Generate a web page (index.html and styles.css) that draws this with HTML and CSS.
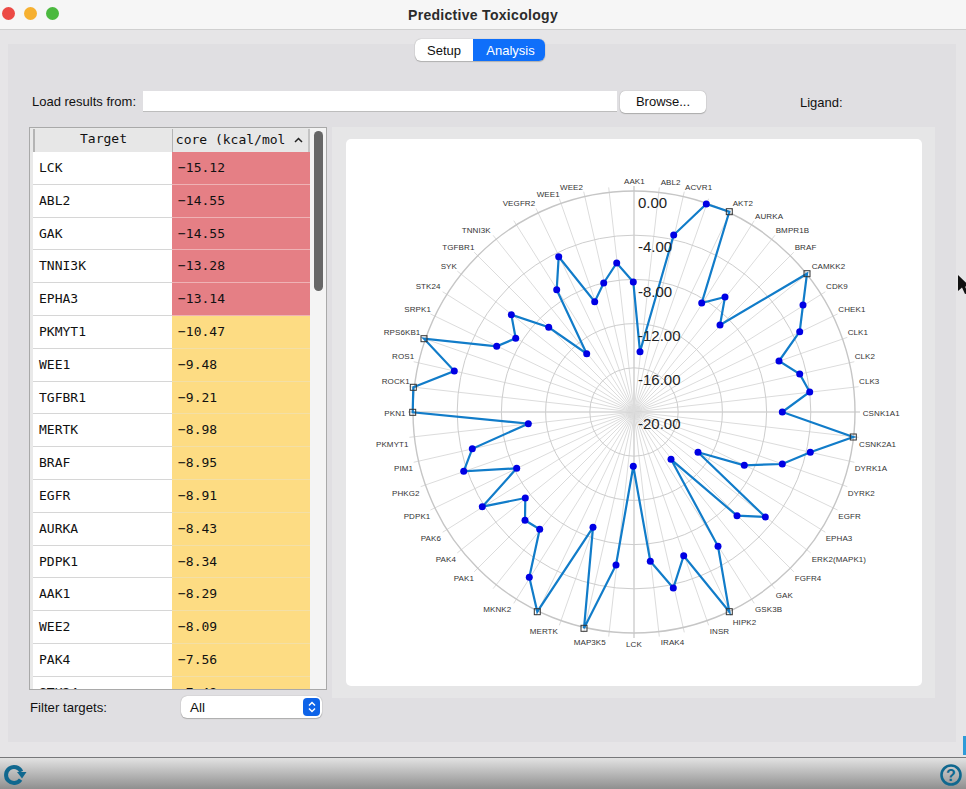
FILE: index.html
```html
<!DOCTYPE html>
<html lang="en">

<head>
  <meta charset="UTF-8">
  <title>Predictive Toxicology</title>
  <link rel="stylesheet" href="styles.css">
</head>

<body>

  <div class="titlebar">
    <div class="lights">
      <span class="light red"></span>
      <span class="light amber"></span>
      <span class="light green"></span>
    </div>
    <div class="title">Predictive Toxicology</div>
  </div>

  <div class="main">
    <div class="pane">

      <div class="tabs">
        <span class="tab">Setup</span>
        <span class="tab active">Analysis</span>
      </div>

      <div class="load">
        <span class="load-label">Load results from:</span>
        <div class="path"></div>
        <div class="browse">Browse...</div>
        <span class="ligand">Ligand:</span>
      </div>

      <div class="content">
        <div class="left">
          <div class="table">
            <div class="rows">
              <div class="head">
                <div class="head-target">Target</div>
                <div class="head-score">
                  <span class="score-text"><span>Score (kcal/mol)</span></span>
                  <svg class="sort" width="9" height="6" viewBox="0 0 9 6"><path d="M1 5 L4.5 1.5 L8 5" fill="none" stroke="#222" stroke-width="1.5"/></svg>
                </div>
              </div>
              <div class="row"><div class="name">LCK</div><div class="score strong">−15.12</div></div>
              <div class="row"><div class="name">ABL2</div><div class="score strong">−14.55</div></div>
              <div class="row"><div class="name">GAK</div><div class="score strong">−14.55</div></div>
              <div class="row"><div class="name">TNNI3K</div><div class="score strong">−13.28</div></div>
              <div class="row"><div class="name">EPHA3</div><div class="score strong">−13.14</div></div>
              <div class="row"><div class="name">PKMYT1</div><div class="score">−10.47</div></div>
              <div class="row"><div class="name">WEE1</div><div class="score">−9.48</div></div>
              <div class="row"><div class="name">TGFBR1</div><div class="score">−9.21</div></div>
              <div class="row"><div class="name">MERTK</div><div class="score">−8.98</div></div>
              <div class="row"><div class="name">BRAF</div><div class="score">−8.95</div></div>
              <div class="row"><div class="name">EGFR</div><div class="score">−8.91</div></div>
              <div class="row"><div class="name">AURKA</div><div class="score">−8.43</div></div>
              <div class="row"><div class="name">PDPK1</div><div class="score">−8.34</div></div>
              <div class="row"><div class="name">AAK1</div><div class="score">−8.29</div></div>
              <div class="row"><div class="name">WEE2</div><div class="score">−8.09</div></div>
              <div class="row"><div class="name">PAK4</div><div class="score">−7.56</div></div>
              <div class="row"><div class="name">STK24</div><div class="score">−7.48</div></div>
            </div>
            <div class="scrollbar"><div class="thumb"></div></div>
          </div>
          <div class="filter">
            <span class="filter-label">Filter targets:</span>
            <div class="select">
              <span>All</span>
              <span class="stepper">
                <svg width="10" height="14" viewBox="0 0 10 14"><path d="M2 5.5 L5 2.5 L8 5.5 M2 8.5 L5 11.5 L8 8.5" fill="none" stroke="#fff" stroke-width="1.5"/></svg>
              </span>
            </div>
          </div>
        </div>

        <div class="plot">
          <div class="plot-card">
            <!-- viewBox is in window coordinates, centre of the radar is 634,413 -->
            <svg class="radar" viewBox="346 140 576 547">
              <g id="spokes"></g>
              <g class="rings">
                <circle cx="634" cy="413" r="221"/>
                <circle cx="634" cy="413" r="176.8"/>
                <circle cx="634" cy="413" r="132.6"/>
                <circle cx="634" cy="413" r="88.4"/>
                <circle cx="634" cy="413" r="44.2"/>
              </g>
              <g id="series"></g>
              <g class="values">
                <text x="638" y="209">0.00</text>
                <text x="638" y="253">-4.00</text>
                <text x="638" y="298">-8.00</text>
                <text x="638" y="342">-12.00</text>
                <text x="638" y="386">-16.00</text>
                <text x="638" y="430">-20.00</text>
              </g>
              <g class="labels">
                <text x="624" y="185">AAK1</text>
                <text x="660.7" y="186">ABL2</text>
                <text x="685" y="191">ACVR1</text>
                <text x="732.7" y="207">AKT2</text>
                <text x="755" y="220">AURKA</text>
                <text x="775.7" y="234">BMPR1B</text>
                <text x="794.7" y="251">BRAF</text>
                <text x="811.7" y="270">CAMKK2</text>
                <text x="826" y="290">CDK9</text>
                <text x="838.3" y="313">CHEK1</text>
                <text x="847.7" y="336">CLK1</text>
                <text x="854.7" y="360">CLK2</text>
                <text x="859" y="385">CLK3</text>
                <text x="862.7" y="416.7">CSNK1A1</text>
                <text x="859" y="448">CSNK2A1</text>
                <text x="854.7" y="472">DYRK1A</text>
                <text x="847.7" y="497">DYRK2</text>
                <text x="838.3" y="520">EGFR</text>
                <text x="825.7" y="542">EPHA3</text>
                <text x="811.7" y="563">ERK2(MAPK1)</text>
                <text x="794.7" y="582">FGFR4</text>
                <text x="775.7" y="599">GAK</text>
                <text x="755" y="613">GSK3B</text>
                <text x="732.7" y="625.7">HIPK2</text>
                <text x="709.7" y="635">INSR</text>
                <text x="660.7" y="646">IRAK4</text>
                <text x="626" y="647.7">LCK</text>
                <text x="573.7" y="646">MAP3K5</text>
                <text x="529.7" y="635">MERTK</text>
                <text x="483.3" y="613">MKNK2</text>
                <text x="453.7" y="582">PAK1</text>
                <text x="435.7" y="563">PAK4</text>
                <text x="420.7" y="542">PAK6</text>
                <text x="403.7" y="520">PDPK1</text>
                <text x="392" y="497">PHKG2</text>
                <text x="394" y="472">PIM1</text>
                <text x="376" y="448">PKMYT1</text>
                <text x="384.3" y="416.7">PKN1</text>
                <text x="381.7" y="385">ROCK1</text>
                <text x="392" y="360">ROS1</text>
                <text x="383.7" y="336">RPS6KB1</text>
                <text x="404.3" y="313">SRPK1</text>
                <text x="415.7" y="290">STK24</text>
                <text x="440.7" y="270">SYK</text>
                <text x="442.3" y="251">TGFBR1</text>
                <text x="461.7" y="234">TNNI3K</text>
                <text x="502.7" y="207">VEGFR2</text>
                <text x="536.7" y="198">WEE1</text>
                <text x="560" y="191">WEE2</text>
              </g>
            </svg>
          </div>
        </div>
      </div>

    </div>
  </div>

  <div class="bottom">
    <svg width="26" height="24" viewBox="0 0 26 24">
      <path d="M18.6 16.6 A8 8 0 1 1 19.3 8.6" fill="none" stroke="#10688f" stroke-width="4"/>
      <path d="M15 9 L24.5 9 L20 15.5 Z" fill="#10688f"/>
    </svg>
    <svg width="24" height="24" viewBox="0 0 24 24">
      <circle cx="12" cy="12" r="9.5" fill="none" stroke="#10688f" stroke-width="2.6"/>
      <text class="help-mark" x="12" y="17.5">?</text>
    </svg>
  </div>

  <div class="edge-mark"></div>
  <svg class="cursor" width="14" height="22" viewBox="0 0 14 22">
    <path d="M1 1 L1 17 L5 13.5 L8 20 L11 19 L8 12.5 L13 12.5 Z" fill="#111"/>
  </svg>

  <script src="chart.js"></script>

</body>

</html>
```

FILE: styles.css
```css
* {
  box-sizing: border-box;
}

html, body {
  margin: 0;
  height: 100%;
}

body {
  position: relative;
  width: 966px;
  height: 789px;
  overflow: hidden;
  display: flex;
  flex-direction: column;
  background: #e6e5e7;
  font-family: "Liberation Sans", Arial, sans-serif;
  font-size: 13px;
  color: #111;
}

/* title bar */
.titlebar {
  position: relative;
  height: 30px;
  flex: none;
  display: flex;
  align-items: center;
  justify-content: center;
  background: #f6f6f6;
  border-bottom: 1px solid #d0d0d0;
}

.lights {
  position: absolute;
  left: 2px;
  top: 7px;
  display: flex;
  gap: 9px;
}

.light {
  width: 13px;
  height: 13px;
  border-radius: 50%;
}

.red { background: #ec4a45; }
.amber { background: #f6b030; }
.green { background: #4bb93f; }

.title {
  font-size: 14px;
  font-weight: bold;
  color: #2b2b2b;
  letter-spacing: .3px;
}

/* tab pane */
.main {
  flex: 1;
  min-height: 0;
  padding: 14px 10px 15px 8px;
}

.pane {
  height: 100%;
  display: flex;
  flex-direction: column;
  background: #e0dfe2;
}

.tabs {
  align-self: center;
  display: flex;
  height: 22px;
  margin: -5px 4px 0 0;
  border-radius: 6px;
  overflow: hidden;
  background: #fff;
  box-shadow: 0 0 1px #8a8a8a, 0 1px 1px #b5b5b5;
}

.tab {
  display: flex;
  align-items: center;
  justify-content: center;
  width: 58px;
  font-size: 13px;
}

.tab.active {
  width: 72px;
  padding-left: 3px;
  background: #0f6ffa;
  color: #fff;
}

.load {
  display: flex;
  align-items: center;
  height: 23px;
  margin-top: 29px;
  padding-left: 24px;
}

.load-label {
  width: 111px;
  font-size: 13px;
  white-space: nowrap;
}

.path {
  width: 474px;
  height: 21px;
  background: #fff;
  border-bottom: 1px solid #bdbdbd;
}

.browse {
  width: 86px;
  height: 22px;
  margin-left: 3px;
  display: flex;
  align-items: center;
  justify-content: center;
  background: #fff;
  border-radius: 5px;
  box-shadow: 0 0 1px #8a8a8a, 0 1px 1px #b0b0b0;
}

.ligand {
  margin-left: 94px;
  padding-top: 2px;
}

.content {
  display: flex;
  flex: 1;
  min-height: 0;
  margin-top: 14px;
  padding-left: 21px;
}

.left {
  width: 303px;
  flex: none;
  display: flex;
  flex-direction: column;
}

/* results table */
.table {
  width: 298px;
  height: 563px;
  display: flex;
  overflow: hidden;
  background: #f4f4f4;
  border: 1px solid #a9a9a9;
}

.rows {
  width: 280px;
  flex: none;
  padding-left: 3px;
  font-family: "DejaVu Sans Mono", monospace;
  background: #e9e9e9;
}

.head {
  display: flex;
  height: 23px;
  margin-top: 1px;
  background: #e7e7e7;
  border-left: 2px solid #b4b4b4;
  border-right: 2px solid #c4c4c4;
}

.head-target {
  width: 137px;
  text-align: center;
  line-height: 20px;
}

.head-score {
  flex: 1;
  display: flex;
  align-items: center;
  padding: 0 0 2px 3px;
  border-left: 1px solid #b4b4b4;
}

.score-text {
  width: 111px;
  overflow: hidden;
  white-space: nowrap;
}

.score-text span {
  display: block;
  margin-left: -8px;
}

.sort {
  margin-left: 7px;
}

.row {
  display: flex;
  height: 32.8px;
  line-height: 31.8px;
}

.name {
  width: 139px;
  padding-left: 6px;
  background: #fff;
  border-bottom: 1px solid #d6d6d6;
}

.score {
  width: 138px;
  padding-left: 6px;
  background: #fddc83;
  border-bottom: 1px solid #f3dfa6;
}

.score.strong {
  background: #e57f85;
  border-bottom: 1px solid #efb2b5;
}

.scrollbar {
  flex: 1;
  padding: 3px 3px 0 4px;
}

.thumb {
  height: 160px;
  background: #676767;
  border-radius: 5px;
}

.filter {
  display: flex;
  align-items: center;
  height: 22px;
  margin-top: 6px;
  padding-left: 1px;
}

.filter-label {
  width: 151px;
  font-size: 13.2px;
}

.select {
  width: 141px;
  height: 22px;
  display: flex;
  align-items: center;
  justify-content: space-between;
  padding: 0 2px 0 9px;
  background: #fff;
  border-radius: 6px;
  box-shadow: 0 0 1px #8a8a8a, 0 1px 1px #b0b0b0;
  font-size: 13.5px;
}

.stepper {
  width: 17px;
  height: 18px;
  display: flex;
  align-items: center;
  justify-content: center;
  background: #0d63e8;
  border-radius: 4px;
}

/* radar plot */
.plot {
  width: 603px;
  height: 571px;
  flex: none;
  padding: 12px 13px 12px 14px;
  background: #e6e6e7;
}

.plot-card {
  height: 547px;
  background: #fff;
  border-radius: 5px;
  overflow: hidden;
}

.radar {
  display: block;
  width: 576px;
  height: 547px;
}

.spoke {
  stroke: #dcdcdc;
  stroke-width: 1;
}

.spoke.axis {
  stroke: #d4d4d4;
  stroke-width: 1.6;
}

.rings circle {
  fill: none;
  stroke: #cdcdcd;
  stroke-width: 1;
}

.rings circle:first-child {
  stroke: #c6c6c6;
  stroke-width: 1.4;
}

.line {
  fill: none;
  stroke: #117cc9;
  stroke-width: 2.2;
  stroke-linejoin: miter;
}

.dot {
  fill: #0000e4;
}

.pin {
  fill: none;
  stroke: #333;
  stroke-width: 1;
}

.values text {
  font-size: 15px;
  fill: #222;
}

.labels text {
  font-size: 8px;
  letter-spacing: .1px;
  fill: #333;
}

/* bottom bar */
.bottom {
  height: 32px;
  flex: none;
  display: flex;
  align-items: center;
  justify-content: space-between;
  padding: 2px 3px 0 2px;
  background: linear-gradient(#e2e2e2, #8f8f8f);
  border-top: 1px solid #77787a;
}

.help-mark {
  font-size: 16px;
  font-weight: bold;
  text-anchor: middle;
  fill: #10688f;
}

.edge-mark {
  position: absolute;
  right: 0;
  top: 736px;
  width: 3px;
  height: 19px;
  background: #2e9bd8;
}

.cursor {
  position: absolute;
  left: 957px;
  top: 274px;
}
```

FILE: chart.js
```js
var SVG = 'http://www.w3.org/2000/svg';
var CX = 634, CY = 413;

// one point per target, clockwise from AAK1. s = score hit the outer ring, drawn as a square
var points = [
  [633.3,283],[640,352.7],[673.7,236],[706.3,205],[729.3,212.7,'s'],[701.7,304],[725,298],[720,326],
  [807,274.7,'s'],[803,306],[799.7,332.7],[779,362],[799.7,375],[809.7,393],[782.3,413],[853.3,438,'s'],
  [810.3,453.3],[782.3,465],[744.3,466.3],[698,453.3],[765.3,518],[737,516.7],[671,460.3],[718,547.3],
  [729.3,612.7,'s'],[683.7,556.7],[673.3,589],[650.3,562.3],[633.3,467.3],[616,566],[584,629.3,'s'],[593,528.3],
  [537.3,612.7,'s'],[529.3,578.3],[539.7,530.3],[525,521.3],[525.3,499],[482.3,507.7],[516.7,469.3],[463.7,472.3],
  [472.3,449.7],[528.3,424.7],[412.7,413.3,'s'],[413.3,388.3,'s'],[454.3,372],[424,339.7,'s'],[496.7,347.3],[515.7,339.3],
  [511.3,315.7],[548.7,328.3],[586.7,354.7],[556.7,290.7],[558.7,257.7],[594.7,302.7],[603.7,284],[616.7,264]
];

function add(parent, tag, attrs) {
  var el = document.createElementNS(SVG, tag);
  for (var k in attrs) el.setAttribute(k, attrs[k]);
  parent.appendChild(el);
  return el;
}

var spokes = document.getElementById('spokes');
for (var i = 0; i < 56; i++) {
  var a = i * Math.PI * 2 / 56;
  add(spokes, 'line', {
    'class': i % 14 == 0 ? 'spoke axis' : 'spoke',
    x1: CX, y1: CY,
    x2: CX + 226 * Math.sin(a),
    y2: CY - 226 * Math.cos(a)
  });
}

var series = document.getElementById('series');
var path = points.map(function(p) { return p[0] + ',' + p[1]; }).join(' ');
add(series, 'polygon', { 'class': 'line', points: path });

points.forEach(function(p) {
  if (p[2] == 's') {
    add(series, 'rect', { 'class': 'pin', x: p[0] - 3, y: p[1] - 3, width: 6, height: 6 });
  } else {
    add(series, 'circle', { 'class': 'dot', cx: p[0], cy: p[1], r: 3.5 });
  }
});
```
